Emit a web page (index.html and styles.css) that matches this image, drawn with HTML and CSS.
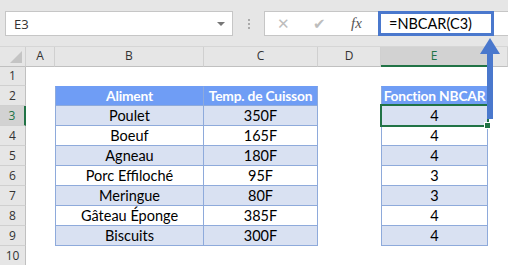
FILE: index.html
```html
<!DOCTYPE html>
<html lang="fr">
<head>
    <meta charset="UTF-8">
    <title>NBCAR</title>
    <link rel="stylesheet" href="styles.css">
</head>
<body>
    <div class="toolbar">
        <div class="namebox">
            <span>E3</span>
            <span class="caret"></span>
        </div>
        <div class="dots"><i></i><i></i><i></i></div>
        <div class="fbuttons">
            <span class="btn">&#x2715;</span>
            <span class="btn check">&#x2714;</span>
            <span class="fx">fx</span>
        </div>
        <div class="formula">
            <div class="finput">=NBCAR(C3)</div>
        </div>
    </div>

    <div class="sheet">
        <div class="row head">
            <div class="corner"><span class="tri"></span></div>
            <div class="ch">A</div>
            <div class="ch">B</div>
            <div class="ch">C</div>
            <div class="ch">D</div>
            <div class="ch active">E</div>
            <div class="ch"></div>
        </div>
        <div class="row">
            <div class="rh">1</div>
            <div></div><div></div><div></div><div></div><div></div><div></div>
        </div>
        <div class="row">
            <div class="rh">2</div>
            <div></div>
            <div class="t th first">Aliment</div>
            <div class="t th">Temp. de Cuisson</div>
            <div></div>
            <div class="t th first">Fonction NBCAR</div>
            <div></div>
        </div>
        <div class="row">
            <div class="rh active">3</div>
            <div></div>
            <div class="t band first">Poulet</div>
            <div class="t band">350F</div>
            <div></div>
            <div class="t band first sel">4</div>
            <div></div>
        </div>
        <div class="row">
            <div class="rh">4</div>
            <div></div>
            <div class="t first">Boeuf</div>
            <div class="t">165F</div>
            <div></div>
            <div class="t first">4</div>
            <div></div>
        </div>
        <div class="row">
            <div class="rh">5</div>
            <div></div>
            <div class="t band first">Agneau</div>
            <div class="t band">180F</div>
            <div></div>
            <div class="t band first">4</div>
            <div></div>
        </div>
        <div class="row">
            <div class="rh">6</div>
            <div></div>
            <div class="t first">Porc Effiloché</div>
            <div class="t">95F</div>
            <div></div>
            <div class="t first">3</div>
            <div></div>
        </div>
        <div class="row">
            <div class="rh">7</div>
            <div></div>
            <div class="t band first">Meringue</div>
            <div class="t band">80F</div>
            <div></div>
            <div class="t band first">3</div>
            <div></div>
        </div>
        <div class="row">
            <div class="rh">8</div>
            <div></div>
            <div class="t first">Gâteau Éponge</div>
            <div class="t">385F</div>
            <div></div>
            <div class="t first">4</div>
            <div></div>
        </div>
        <div class="row">
            <div class="rh">9</div>
            <div></div>
            <div class="t band first">Biscuits</div>
            <div class="t band">300F</div>
            <div></div>
            <div class="t band first">4</div>
            <div></div>
        </div>
        <div class="row">
            <div class="rh">10</div>
            <div></div><div></div><div></div><div></div><div></div><div></div>
        </div>
    </div>

    <!-- arrow from the formula to the selected cell -->
    <svg class="arrow" width="24" height="90" viewBox="0 0 24 90">
        <polygon points="12,2 2,18 22,18" fill="#4a78cd"/>
        <rect x="9" y="17" width="6" height="66" fill="#4a78cd"/>
    </svg>
</body>
</html>
```

FILE: styles.css
```css
body {
    margin: 0;
    width: 508px;
    height: 265px;
    overflow: hidden;
    background: #fff;
    font-family: 'Lato', 'Liberation Sans', sans-serif;
    position: relative;
}
.toolbar {
    height: 47px;
    background: #e6e6e6;
    display: flex;
    align-items: flex-start;
    padding-top: 11px;
    box-sizing: border-box;
    border-bottom: 1px solid #d6d6d6;
}
.namebox {
    margin-left: 5px;
    width: 228px;
    height: 25px;
    box-sizing: border-box;
    background: #fff;
    border: 1px solid #c6c6c6;
    display: flex;
    align-items: center;
    justify-content: space-between;
    padding: 0 7px 0 8px;
    font-family: 'Open Sans', sans-serif;
    font-size: 13px;
    color: #333;
}
.caret {
    width: 0;
    height: 0;
    border-left: 4px solid transparent;
    border-right: 4px solid transparent;
    border-top: 4px solid #777;
}
.dots {
    width: 31px;
    display: flex;
    flex-direction: column;
    align-items: center;
    gap: 2px;
    padding-top: 8px;
}
.dots i {
    width: 2px;
    height: 2px;
    background: #aaa;
}
.fbuttons {
    width: 114px;
    height: 25px;
    box-sizing: border-box;
    background: #fff;
    border: 1px solid #c6c6c6;
    border-right: none;
    display: flex;
    align-items: center;
    padding-left: 12px;
}
.btn {
    color: #bdbdbd;
    font-size: 15px;
    width: 36px;
    font-family: 'DejaVu Sans', sans-serif;
}
.btn.check {
    width: 38px;
}
.fx {
    font-family: 'Liberation Serif', serif;
    font-style: italic;
    font-size: 15px;
    color: #555;
}
.formula {
    flex: 1;
    height: 25px;
    box-sizing: border-box;
    background: #fff;
    border-top: 1px solid #c6c6c6;
    border-bottom: 1px solid #c6c6c6;
}
.finput {
    width: 116px;
    height: 25px;
    margin-top: -1px;
    box-sizing: border-box;
    border: 3px solid #4a78cd;
    padding-left: 8px;
    font-size: 14.5px;
    line-height: 19px;
    color: #000;
}
.sheet {
    display: flex;
    flex-direction: column;
}
.row {
    display: grid;
    grid-template-columns: 26px 29px 149px 114px 63px 107px 1fr;
    height: 20px;
}
.row > div {
    box-sizing: border-box;
}
.row.head {
    height: 19px;
    background: #e6e6e6;
}
.corner {
    border-right: 1px solid #d0d0d0;
    border-bottom: 1px solid #c0c0c0;
    position: relative;
}
.tri {
    position: absolute;
    right: 3px;
    bottom: 3px;
    width: 0;
    height: 0;
    border-left: 12px solid transparent;
    border-bottom: 12px solid #c4c4c4;
}
.ch {
    border-right: 1px solid #d0d0d0;
    border-bottom: 1px solid #c0c0c0;
    text-align: center;
    font-family: 'Open Sans', sans-serif;
    font-size: 12px;
    line-height: 18px;
    color: #333;
}
.ch.active {
    background: #d2d2d2;
    border-bottom: 2px solid #217346;
    color: #217346;
}
.rh {
    background: #e6e6e6;
    border-right: 1px solid #c0c0c0;
    border-bottom: 1px solid #d0d0d0;
    text-align: center;
    font-family: 'Open Sans', sans-serif;
    font-size: 12px;
    line-height: 19px;
    color: #333;
}
.rh.active {
    background: #d2d2d2;
    border-right: 2px solid #217346;
    color: #217346;
}
.t {
    border-right: 1px solid #8eaadb;
    border-bottom: 1px solid #8eaadb;
    text-align: center;
    font-size: 14.5px;
    line-height: 19px;
    color: #000;
    white-space: nowrap;
    overflow: hidden;
}
.t.first {
    border-left: 1px solid #8eaadb;
}
.t.th {
    background: #6f9df5;
    color: #fff;
    font-weight: bold;
    font-size: 13.8px;
    letter-spacing: -0.2px;
    border-top: 1px solid #6f9df5;
    line-height: 18px;
}
.t.band {
    background: #d9e1f2;
}
.t.sel {
    position: relative;
    overflow: visible;
}
.t.sel::after {
    content: "";
    position: absolute;
    left: -2px;
    top: -2px;
    right: -2px;
    bottom: -2px;
    border: 2px solid #217346;
}
.t.sel::before {
    content: "";
    position: absolute;
    right: -4px;
    bottom: -4px;
    width: 5px;
    height: 5px;
    background: #217346;
    border: 1px solid #fff;
    z-index: 1;
}
.arrow {
    position: absolute;
    left: 478px;
    top: 36px;
}
```
